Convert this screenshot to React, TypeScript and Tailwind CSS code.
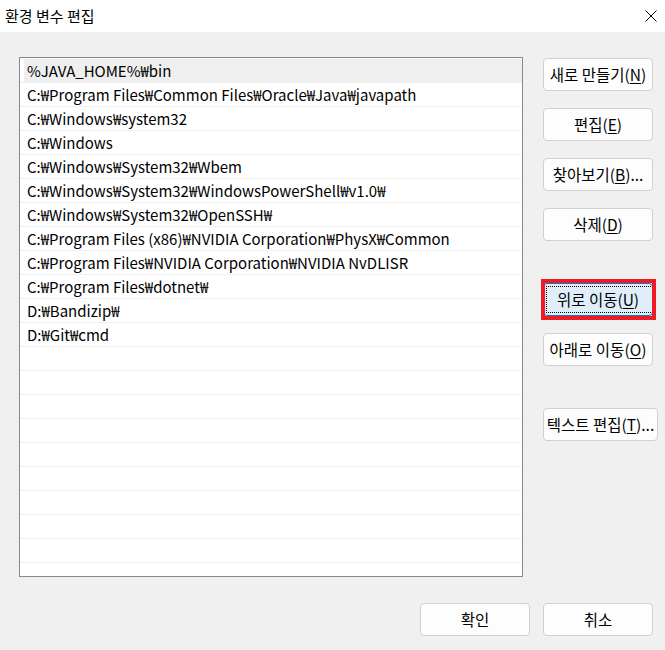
const paths = [
  '%JAVA_HOME%₩bin',
  'C:₩Program Files₩Common Files₩Oracle₩Java₩javapath',
  'C:₩Windows₩system32',
  'C:₩Windows',
  'C:₩Windows₩System32₩Wbem',
  'C:₩Windows₩System32₩WindowsPowerShell₩v1.0₩',
  'C:₩Windows₩System32₩OpenSSH₩',
  'C:₩Program Files (x86)₩NVIDIA Corporation₩PhysX₩Common',
  'C:₩Program Files₩NVIDIA Corporation₩NVIDIA NvDLISR',
  'C:₩Program Files₩dotnet₩',
  'D:₩Bandizip₩',
  'D:₩Git₩cmd',
];

const font = { fontFamily: '"Noto Sans CJK KR", "Noto Sans", sans-serif' };

interface BtnProps {
  label: string;
  keyChar?: string;
  suffix?: string;
  wide?: boolean;
}

const DialogButton = ({ label, keyChar, suffix, wide }: BtnProps) => (
  <button
    className={`flex h-[33px] ${wide ? 'w-[115px]' : 'w-[110px]'} items-center justify-center whitespace-nowrap rounded-[4px] border border-[#d0d0d0] bg-[#fdfdfd] text-[15.5px] text-black`}
  >
    {label}
    {keyChar && (
      <>
        (<span className="underline underline-offset-2">{keyChar}</span>)
      </>
    )}
    {suffix}
  </button>
);

export default function App() {
  const rows = Array.from({ length: 22 }, (_, i) => paths[i] ?? '');

  return (
    <div className="flex h-[650px] w-[665px] flex-col bg-[#f0f0f0]" style={font}>
      {/* Title bar */}
      <div className="flex h-8 shrink-0 items-center justify-between bg-white pl-[5px] pr-[8px]">
        <span className="text-[15px] text-black">환경 변수 편집</span>
        <svg width="12" height="12" viewBox="0 0 12 12" className="text-black">
          <path d="M0.5 0.5 L11.5 11.5 M11.5 0.5 L0.5 11.5" stroke="currentColor" strokeWidth="1" />
        </svg>
      </div>

      {/* Body */}
      <div className="flex flex-1 flex-col">
        <div className="flex pl-[19px] pt-[25px]">
          {/* Path list */}
          <div className="h-[520px] w-[504px] overflow-hidden border border-[#828790] bg-white pt-px">
            {rows.map((p, i) => (
              <div key={i} className="h-6 border-b border-[#f0f0f0]">
                <div
                  className={`ml-[4px] flex h-full items-center whitespace-nowrap pl-[3px] text-[15px] leading-none text-black ${i === 0 ? 'bg-[#efefef]' : ''}`}
                >
                  {p}
                </div>
              </div>
            ))}
          </div>

          {/* Side buttons */}
          <div className="ml-[20px] flex flex-col pt-[1px]">
            <div className="flex flex-col gap-[17px]">
              <DialogButton label="새로 만들기" keyChar="N" />
              <DialogButton label="편집" keyChar="E" />
              <DialogButton label="찾아보기" keyChar="B" suffix="..." />
              <DialogButton label="삭제" keyChar="D" />
            </div>
            <div className="mt-[42px] flex flex-col gap-[17px]">
              <div className="relative">
                <button className="flex h-[33px] w-[110px] items-center justify-center whitespace-nowrap rounded-[4px] border border-[#0078d4] bg-[#e0eef9] text-[15.5px] text-black">
                  <span className="absolute inset-[3px] border border-dotted border-black" />
                  위로 이동(<span className="underline underline-offset-2">U</span>)
                </button>
                {/* red annotation box */}
                <span className="pointer-events-none absolute -left-[2px] -top-[4px] h-[41px] w-[115px] border-4 border-[#ed1c24]" />
              </div>
              <DialogButton label="아래로 이동" keyChar="O" />
            </div>
            <div className="mt-[42px]">
              <DialogButton label="텍스트 편집" keyChar="T" suffix="..." wide />
            </div>
          </div>
        </div>

        {/* Footer buttons */}
        <div className="mt-[26px] flex justify-end gap-[13px] pr-[12px]">
          <DialogButton label="확인" />
          <DialogButton label="취소" />
        </div>
      </div>
    </div>
  );
}
